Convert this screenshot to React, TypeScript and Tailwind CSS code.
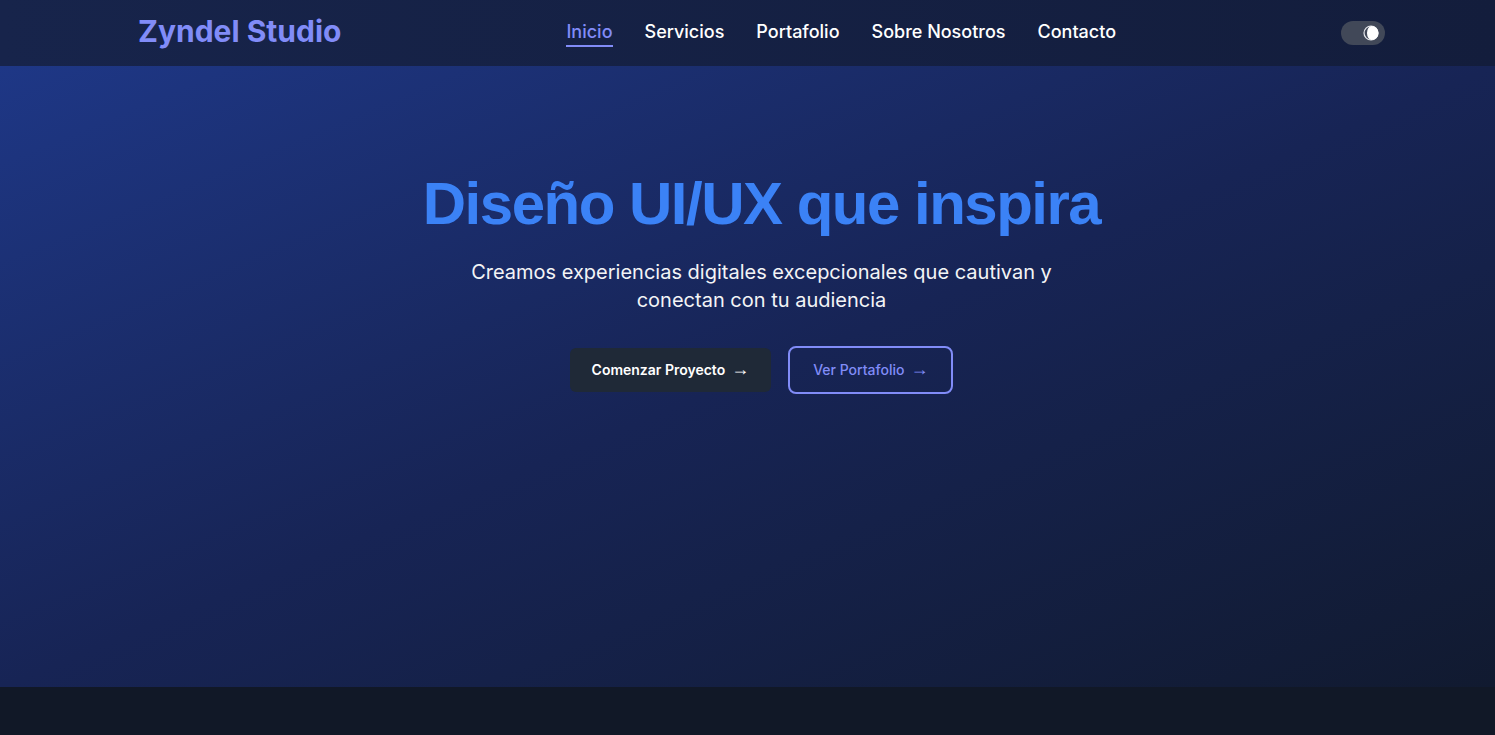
import React from "react";

function MoonToggle() {
  return (
    <button className="ml-auto flex h-6 w-11 items-center justify-end rounded-full bg-[#414858] pr-[5px]">
      <svg width="18" height="18" viewBox="0 0 18 18">
        <circle cx="9" cy="9" r="7" fill="none" stroke="#e5e7eb" strokeWidth="1.2" />
        <path d="M9.5 2 A7 7 0 0 1 9.5 16 A4.5 7 0 0 1 9.5 2 Z" fill="#ffffff" />
      </svg>
    </button>
  );
}

const arrowFont = { fontFamily: "'Liberation Sans', Arial, sans-serif" };

export default function App() {
  const inter = { fontFamily: "Inter, 'Noto Sans', sans-serif" };
  return (
    <div className="min-h-screen w-full bg-[#111827]" style={inter}>
      <header className="flex h-[66px] items-center bg-gradient-to-r from-[#17244b] to-[#131d3c] pl-[138px] pr-[110px]">
        <div className="flex w-full items-center">
          <div className="pb-1 text-[30px] font-bold leading-9 text-[#818cf8]">Zyndel Studio</div>
          <nav className="ml-[225px] flex items-center gap-8 text-lg font-medium text-white">
            <a className="border-b-2 border-[#818cf8] leading-[26px] text-[#818cf8]">Inicio</a>
            <a className="border-b-2 border-transparent leading-[26px]">Servicios</a>
            <a className="border-b-2 border-transparent leading-[26px]">Portafolio</a>
            <a className="border-b-2 border-transparent leading-[26px]">Sobre Nosotros</a>
            <a className="border-b-2 border-transparent leading-[26px]">Contacto</a>
          </nav>
          <MoonToggle />
        </div>
      </header>
      <section className="h-[621px] bg-gradient-to-br from-[#1e3786] via-[#172455] to-[#111a30] pl-[138px] pr-[110px]">
        <div className="flex flex-col items-center pt-[108px] text-center">
          <h1
            className="text-[60px] font-bold leading-[60px] tracking-[-1.5px] text-[#3b82f6]"
            style={{ fontFamily: "'Liberation Sans', Arial, sans-serif" }}
          >
            Diseño UI/UX que inspira
          </h1>
          <p className="mt-[24px] max-w-[600px] text-xl leading-7 text-[#f3f4f6]">
            Creamos experiencias digitales excepcionales que cautivan y conectan con tu audiencia
          </p>
          <div className="mt-[32px] flex items-center gap-[17px]">
            <button className="flex h-11 items-center gap-1.5 rounded-md bg-[#1f2937] px-[22px] text-sm font-semibold text-white">
              Comenzar Proyecto <span className="pb-[3px] text-lg leading-none" style={arrowFont}>→</span>
            </button>
            <button className="flex h-12 items-center gap-1.5 rounded-lg border-2 border-[#818cf8] px-[23px] text-sm font-medium text-[#818cf8]">
              Ver Portafolio <span className="pb-[3px] text-lg leading-none" style={arrowFont}>→</span>
            </button>
          </div>
        </div>
      </section>
      <div className="h-[48px] bg-[#111827]" />
    </div>
  );
}
